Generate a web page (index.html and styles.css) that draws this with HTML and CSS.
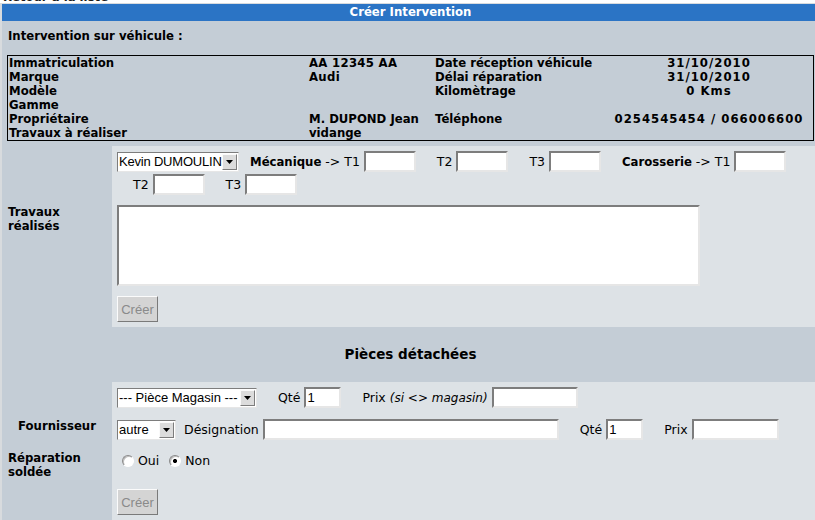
FILE: index.html
```html
<!DOCTYPE html>
<html lang="fr">
<head>
<meta charset="utf-8">
<title>Créer Intervention</title>
<link rel="stylesheet" href="styles.css">
</head>
<body>
<div class="back">Retour à la liste</div>
<div class="panel">
  <div class="titlebar">Créer Intervention</div>
  <div class="intro">Intervention sur véhicule :</div>
  <div class="vehicle">
    <span>Immatriculation</span><span class="v">AA 12345 AA</span><span>Date réception véhicule</span><span class="c">31/10/2010</span>
    <span>Marque</span><span class="v">Audi</span><span>Délai réparation</span><span class="c">31/10/2010</span>
    <span>Modèle</span><span></span><span>Kilomètrage</span><span class="c">0 Kms</span>
    <span>Gamme</span><span></span><span></span><span></span>
    <span>Propriétaire</span><span>M. DUPOND Jean</span><span>Téléphone</span><span class="c">0254545454 / 066006600</span>
    <span>Travaux à réaliser</span><span>vidange</span><span></span><span></span>
  </div>

  <div class="section section-travaux">
    <div class="labels">
      <div class="lbl lbl-travaux">Travaux réalisés</div>
    </div>
    <div class="fields">
      <div class="ctrls">
        <div class="sel w122"><select class="narrow"><option>Kevin DUMOULIN</option></select><span class="sel-btn"><svg width="7" height="4" viewBox="0 0 7 4"><path d="M0 0h7L3.5 4z" fill="#000"/></svg></span></div>
        <label class="grp grp-tight"><span class="t"><b>Mécanique</b> -&gt; T1</span><input class="in w52" type="text"></label>
        <label class="grp"><span class="t">T2</span><input class="in w52" type="text"></label>
        <label class="grp"><span class="t">T3</span><input class="in w52" type="text"></label>
        <label class="grp"><span class="t"><b>Carosserie</b> -&gt; T1</span><input class="in w52" type="text"></label>
        <label class="grp"><span class="t">T2</span><input class="in w52" type="text"></label>
        <label class="grp"><span class="t">T3</span><input class="in w52" type="text"></label>
      </div>
      <textarea class="ta"></textarea>
      <button class="btn" type="button" disabled>Créer</button>
    </div>
  </div>

  <div class="pieces-head">Pièces détachées</div>

  <div class="section section-pieces">
    <div class="labels">
      <div class="lbl lbl-fourn">Fournisseur</div>
      <div class="lbl lbl-repar">Réparation soldée</div>
    </div>
    <div class="fields">
      <div class="row">
        <div class="sel w140"><select><option>--- Pièce Magasin ---</option></select><span class="sel-btn"><svg width="7" height="4" viewBox="0 0 7 4"><path d="M0 0h7L3.5 4z" fill="#000"/></svg></span></div>
        <label class="grp"><span class="t">Qté</span><input class="in w37" type="text" value="1"></label>
        <label class="grp"><span class="t">Prix <i>(si &lt;&gt; magasin)</i></span><input class="in w86" type="text"></label>
      </div>
      <div class="row row-2">
        <div class="sel w59"><select><option>autre</option></select><span class="sel-btn"><svg width="7" height="4" viewBox="0 0 7 4"><path d="M0 0h7L3.5 4z" fill="#000"/></svg></span></div>
        <label class="grp grp-desig"><span class="t">Désignation</span><input class="in w296" type="text"></label>
        <label class="grp"><span class="t">Qté</span><input class="in w37" type="text" value="1"></label>
        <label class="grp"><span class="t">Prix</span><input class="in w87" type="text"></label>
      </div>
      <div class="radios">
        <label class="radio"><input type="radio" name="soldee"><span>Oui</span></label>
        <label class="radio"><input type="radio" name="soldee" checked><span>Non</span></label>
      </div>
      <button class="btn btn-2" type="button" disabled>Créer</button>
    </div>
  </div>
</div>
</body>
</html>
```
FILE: styles.css
```css
html, body {
  margin: 0;
  padding: 0;
  overflow: hidden;
}

body {
  font-family: "DejaVu Sans", Verdana, sans-serif;
  font-size: 12.5px;
  color: #000;
  background: #fff;
  width: 815px;
  height: 520px;
}

.back {
  margin-top: -10px;
  height: 13px;
  line-height: 14px;
  padding-left: 3px;
  font-weight: bold;
  font-size: 11.7px;
  color: #1b1b1b;
  white-space: nowrap;
}

.panel {
  width: 817px;
  border-left: 2px solid #d8dbde;
  border-top: 1px solid #d8dbde;
  background: #c4cdd6;
  min-height: 600px;
}

.titlebar {
  height: 17px;
  line-height: 17px;
  background: #2b74c5;
  color: #fff;
  font-weight: bold;
  font-size: 11.7px;
  text-align: center;
}

.intro {
  font-weight: bold;
  font-size: 11.7px;
  line-height: 14px;
  padding: 8px 6px 12px;
}

.vehicle {
  margin: 0 5px;
  border: 1px solid #000;
  padding-left: 1px;
  display: grid;
  grid-template-columns: 300px 126px 170px 1fr;
  grid-auto-rows: 14px;
  font-weight: bold;
  font-size: 11.7px;
  line-height: 14px;
  white-space: nowrap;
}

.vehicle .v {
  letter-spacing: 0.3px;
}

.vehicle .c {
  text-align: center;
  letter-spacing: 1px;
}

.section {
  display: grid;
  grid-template-columns: 110px 1fr;
}

.section-travaux {
  margin-top: 5px;
}

.labels {
  font-weight: bold;
  font-size: 11.7px;
  line-height: 14px;
}

.lbl-travaux {
  margin-top: 59px;
  padding-left: 6px;
}

.lbl-fourn {
  margin-top: 37px;
  text-align: center;
}

.lbl-repar {
  margin-top: 18px;
  padding-left: 6px;
}

.fields {
  background: #dde2e6;
  padding: 5px 0 5px 5px;
}

.ctrls {
  display: flex;
  flex-wrap: wrap;
  align-items: center;
  column-gap: 5px;
  row-gap: 2px;
}

.row {
  display: flex;
  align-items: center;
  column-gap: 5px;
  height: 21px;
}

.row-2 {
  margin-top: 11px;
}

.grp {
  display: flex;
  align-items: center;
  gap: 4px;
  margin-left: 16px;
  white-space: nowrap;
  line-height: 14px;
}

.grp-tight {
  margin-left: 6px;
}

.grp-desig {
  margin-left: 3px;
}

.grp b {
  font-size: 11.7px;
}

.grp i {
  font-size: 12px;
}

.in {
  box-sizing: border-box;
  height: 21px;
  margin: 0;
  padding: 0 1px;
  border: 2px solid;
  border-color: #7d7d7d #e6e6e6 #e6e6e6 #7d7d7d;
  background: #fff;
  font: 13px "Liberation Sans", Arial, sans-serif;
  color: #000;
  outline: none;
}

.w37 { width: 37px; }
.w52 { width: 52px; }
.w86 { width: 86px; }
.w87 { width: 87px; }
.w296 { width: 296px; }

.sel {
  box-sizing: border-box;
  height: 20px;
  display: flex;
  align-items: center;
  background: #fff;
  border: 1px solid;
  border-color: #7d7d7d #e6e6e6 #e6e6e6 #7d7d7d;
  padding: 1px 1px 1px 0;
  flex-shrink: 0;
}

.w122 { width: 122px; }
.w140 { width: 140px; }
.w59 { width: 59px; }

.sel select {
  appearance: none;
  -webkit-appearance: none;
  flex: 1;
  min-width: 0;
  height: 16px;
  border: none;
  background: transparent;
  padding: 0 0 0 1px;
  margin: 0;
  font: 13px "Liberation Sans", Arial, sans-serif;
  color: #000;
  outline: none;
}

.sel select.narrow {
  letter-spacing: -0.2px;
}

.sel-btn {
  box-sizing: border-box;
  width: 15px;
  height: 16px;
  flex-shrink: 0;
  display: flex;
  align-items: center;
  justify-content: center;
  background: #dcdcdc;
  border: 1px solid;
  border-color: #fafafa #7d7d7d #7d7d7d #fafafa;
}

.ta {
  display: block;
  box-sizing: border-box;
  width: 583px;
  height: 81px;
  margin: 10px 0 0;
  border: 2px solid;
  border-color: #7d7d7d #e6e6e6 #e6e6e6 #7d7d7d;
  background: #fff;
  resize: none;
  outline: none;
}

.btn {
  display: block;
  box-sizing: border-box;
  width: 41px;
  height: 26px;
  margin-top: 10px;
  padding: 0;
  background: #d4d4d4;
  border: 1px solid;
  border-color: #fbfbfb #7a7a7a #7a7a7a #fbfbfb;
  color: #8a8a8a;
  font: 13px "Liberation Sans", Arial, sans-serif;
}

.btn-2 {
  margin-top: 21px;
}

.pieces-head {
  height: 55px;
  line-height: 55px;
  text-align: center;
  font-weight: bold;
  font-size: 13.5px;
}

.radios {
  display: flex;
  align-items: center;
  height: 14px;
  margin-top: 14px;
}

.radio {
  display: flex;
  align-items: center;
  gap: 4px;
  line-height: 14px;
  margin-left: 5px;
}

.radio + .radio {
  margin-left: 10px;
}

.radio input {
  appearance: none;
  -webkit-appearance: none;
  box-sizing: border-box;
  width: 12px;
  height: 12px;
  margin: 0;
  border-radius: 50%;
  border: 1px solid;
  border-color: #8a8a8a #ffffff #ffffff #8a8a8a;
  background: #fff;
  box-shadow: inset 1px 1px 0 #bdbdbd;
}

.radio input:checked {
  background: radial-gradient(circle, #000 0 1.8px, #fff 2.3px);
}
```
